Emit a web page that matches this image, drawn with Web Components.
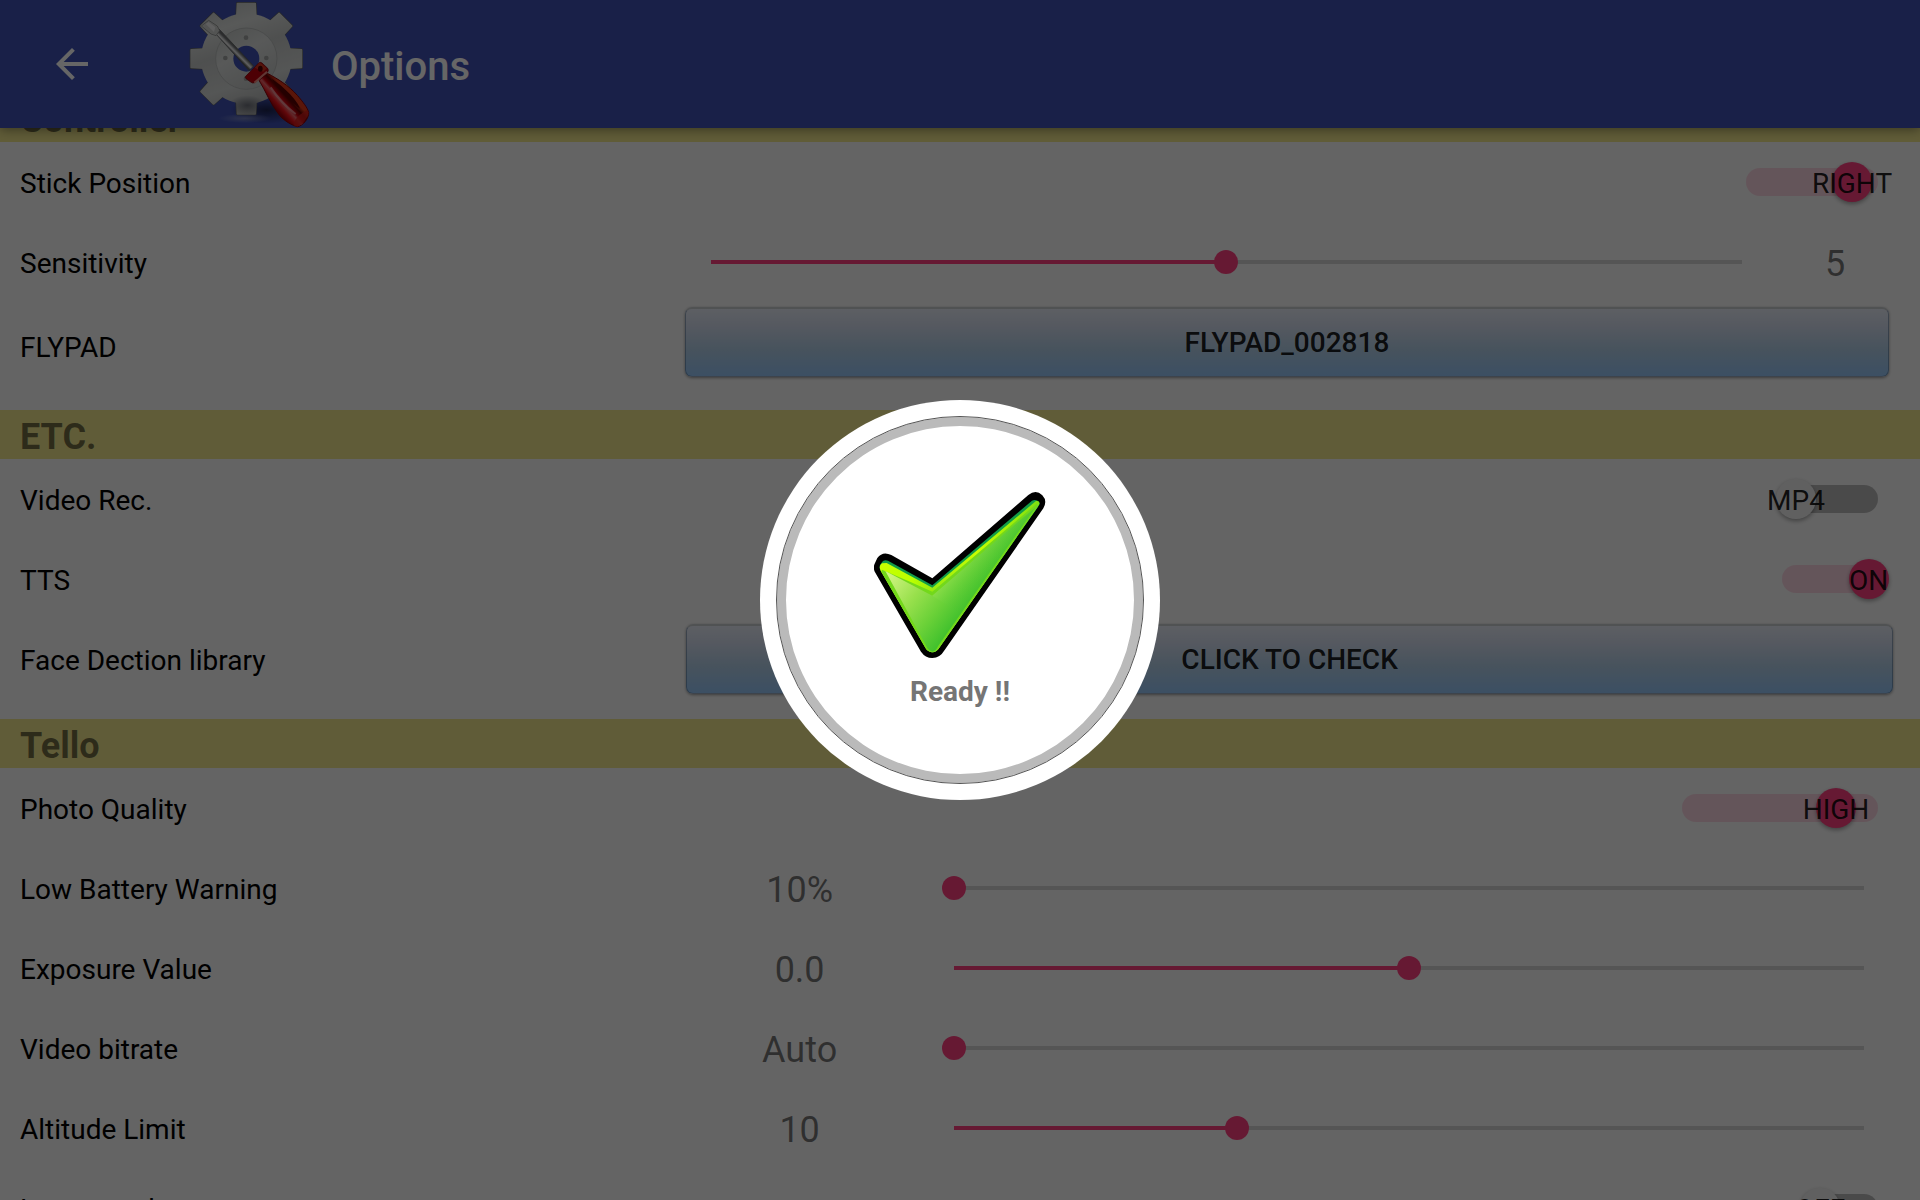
<!DOCTYPE html>
<html lang="en">
<head>
<meta charset="utf-8">
<title>Options</title>
<style>
  :root {
    --primary: #3f51b5;
    --accent: #ff4081;
    --surface: #fafafa;
    --band: #f0e68c;
    --text: #000;
    --text-secondary: rgba(0, 0, 0, .54);
    --text-control: rgba(0, 0, 0, .87);
  }

  body {
    margin: 0;
    height: 100vh;
    overflow: hidden;
    background: var(--surface);
    color: var(--text);
    font: 28px/33px Roboto, "Liberation Sans", sans-serif;
  }
</style>
</head>
<body>
<options-page></options-page>

<script>
class AppBar extends HTMLElement {
  constructor() {
    super();
    this.attachShadow({ mode: 'open' });
    this.shadowRoot.innerHTML = `
      <style>
        :host {
          display: block;
          position: relative;
          z-index: 1;
          background: var(--primary);
          box-shadow: 0 2px 10px rgba(0, 0, 0, .4);
        }

        header {
          display: flex;
          align-items: center;
          height: 128px;
          padding: 0 48px;
          color: #fff;
        }

        button {
          width: 48px;
          height: 48px;
          padding: 0;
          border: 0;
          background: none;
          color: inherit;
        }

        svg {
          display: block;
        }

        .logo {
          margin: 0 19px 0 88px;
        }

        h1 {
          margin: 0;
          padding-top: 6px;
          font-size: 40px;
          line-height: 48px;
          font-weight: 500;
        }
      </style>
      <header>
        <button type="button" aria-label="Back">
          <svg width="48" height="48" viewBox="0 0 24 24"><path fill="currentColor" d="M20 11H7.83l5.59-5.59L12 4l-8 8 8 8 1.41-1.41L7.83 13H20z"/></svg>
        </button>
        <svg class="logo" width="128" height="128" viewBox="72 0 384 384" aria-hidden="true">
          <defs>
            <linearGradient id="metal" gradientUnits="userSpaceOnUse" x1="190" y1="10" x2="300" y2="345">
              <stop offset="0" stop-color="#c6cac8"/>
              <stop offset=".2" stop-color="#dde0de"/>
              <stop offset=".42" stop-color="#c4c7c6"/>
              <stop offset=".7" stop-color="#d4d7d6"/>
              <stop offset="1" stop-color="#a8aaa9"/>
            </linearGradient>
            <linearGradient id="face" gradientUnits="userSpaceOnUse" x1="200" y1="90" x2="300" y2="265">
              <stop offset="0" stop-color="#c6cac8"/>
              <stop offset=".4" stop-color="#dcdfde"/>
              <stop offset="1" stop-color="#c2c5c4"/>
            </linearGradient>
            <linearGradient id="handle" gradientUnits="userSpaceOnUse" x1="334" y1="312" x2="378" y2="272">
              <stop offset="0" stop-color="#a00008"/>
              <stop offset=".25" stop-color="#f0141c"/>
              <stop offset=".45" stop-color="#ee6a70"/>
              <stop offset=".58" stop-color="#c8000c"/>
              <stop offset=".8" stop-color="#620000"/>
              <stop offset="1" stop-color="#e03818"/>
            </linearGradient>
            <linearGradient id="shaft" gradientUnits="userSpaceOnUse" x1="212" y1="152" x2="223" y2="141">
              <stop offset="0" stop-color="#5c5e60"/>
              <stop offset=".45" stop-color="#f4f4f4"/>
              <stop offset="1" stop-color="#6e7072"/>
            </linearGradient>
            <radialGradient id="shade">
              <stop offset="0" stop-color="#10142c" stop-opacity=".75"/>
              <stop offset="1" stop-color="#10142c" stop-opacity="0"/>
            </radialGradient>
            <radialGradient id="gleam">
              <stop offset="0" stop-color="#9fa8c8" stop-opacity=".55"/>
              <stop offset="1" stop-color="#9fa8c8" stop-opacity="0"/>
            </radialGradient>
            <path id="tooth" d="M-29-166q0-2 3-2h52q3 0 3 2l2 38q1 8 18 16l-8 20h-82l-8-20q17-8 18-16z"/>
            <g id="gear">
              <use href="#tooth"/>
              <use href="#tooth" transform="rotate(45)"/>
              <use href="#tooth" transform="rotate(90)"/>
              <use href="#tooth" transform="rotate(135)"/>
              <use href="#tooth" transform="rotate(180)"/>
              <use href="#tooth" transform="rotate(225)"/>
              <use href="#tooth" transform="rotate(270)"/>
              <use href="#tooth" transform="rotate(315)"/>
            </g>
            <mask id="cut" maskUnits="userSpaceOnUse" x="72" y="0" width="384" height="384">
              <g transform="translate(259 176)" fill="#fff">
                <use href="#gear"/>
                <circle r="136"/>
                <circle r="39" fill="#000"/>
              </g>
            </mask>
          </defs>
          <ellipse cx="320" cy="330" rx="110" ry="42" fill="url(#shade)"/>
          <ellipse cx="255" cy="355" rx="80" ry="14" fill="url(#gleam)"/>
          <g transform="translate(259 176)" fill="none" stroke="#5c5f63" stroke-width="4">
            <use href="#gear"/>
          </g>
          <g mask="url(#cut)">
            <rect x="72" width="384" height="384" fill="url(#metal)"/>
            <circle cx="259" cy="176" r="92" fill="url(#face)" stroke="#aeb1b0" stroke-width="2"/>
            <ellipse cx="262" cy="316" rx="56" ry="30" fill="url(#shade)" opacity=".6"/>
            <g fill="#a0a3a2">
              <circle cx="258" cy="113" r="7"/>
              <circle cx="196" cy="174" r="7"/>
              <circle cx="319" cy="174" r="7"/>
              <circle cx="258" cy="236" r="7"/>
            </g>
          </g>
          <path d="M166 100l12-12 103 110-14 14z" fill="url(#shaft)" stroke="#55585a" stroke-width="2"/>
          <path d="M124 78l22-17 26 17 7 14-11 15-15-5z" fill="#cfd1d0" stroke="#7b7e7d" stroke-width="2"/>
          <path d="M137 72l9-6 20 16-4 14z" fill="#eee"/>
          <path d="M297 241l25-21c32 17 62 35 90 66 17 20 31 38 34 51 2 17-18 42-34 43-13-3-39-16-55-36-26-32-39-70-60-103z" fill="url(#handle)" stroke="#870008" stroke-width="3"/>
          <path d="M335 237c28 16 75 60 85 89-21-13-70-62-85-89z" fill="#5a0000"/>
          <path d="M332 262c24 36 47 59 75 80" fill="none" stroke="#f5a4a8" stroke-width="6" opacity=".75"/>
          <path d="M446 337c-1 15-18 37-34 43-8-1-13-5-10-12 4-14 25-32 37-36 4-1 6 2 7 5z" fill="#d81c1a" opacity=".8"/>
          <path d="M257 229l39-40q5-4 10 0l17 16q4 6 0 11l-39 32q-6 3-12-2l-14-10q-4-4-1-7z" fill="#c0000c" stroke="#780006" stroke-width="2"/>
          <path d="M283 248l38-33" stroke="#f08a80" stroke-width="6"/>
          <path d="M284 203l12-13q5-3 9 1l15 14-10 10z" fill="#d3331c"/>
          <ellipse cx="301" cy="206" rx="7" ry="9" fill="#500000"/>
        </svg>
        <h1><slot></slot></h1>
      </header>
    `;
  }
}

class OptionSection extends HTMLElement {
  constructor() {
    super();
    this.attachShadow({ mode: 'open' });
    this.shadowRoot.innerHTML = `
      <style>
        :host {
          display: block;
        }

        h2 {
          margin: 0;
          padding: 6px 20px 1px;
          background: var(--band);
          color: var(--text-secondary);
          font-size: 36px;
          line-height: 42px;
          font-weight: 700;
        }

        .rows {
          display: flex;
          flex-direction: column;
        }

        :host([spaced]) .rows {
          padding-bottom: 20px;
        }
      </style>
      <section>
        <h2>${this.getAttribute('heading')}</h2>
        <div class="rows"><slot></slot></div>
      </section>
    `;
  }
}

class SwitchRow extends HTMLElement {
  constructor() {
    super();
    this.attachShadow({ mode: 'open' });
    const checked = this.hasAttribute('checked') ? 'checked' : '';
    this.shadowRoot.innerHTML = `
      <style>
        :host {
          --thumb: 80px;
          display: block;
        }

        label {
          display: flex;
          align-items: center;
          justify-content: space-between;
          height: 80px;
          padding: 0 28px 0 20px;
        }

        :host([flush]) label {
          padding-right: 18px;
        }

        .name {
          padding-top: 3px;
        }

        .switch {
          display: grid;
          grid-template-columns: var(--thumb) var(--thumb);
          align-items: center;
          justify-items: center;
        }

        input {
          grid-area: 1 / 1 / 2 / 3;
          justify-self: stretch;
          appearance: none;
          height: 28px;
          margin: 0 14px;
          border-radius: 14px;
          background: rgba(0, 0, 0, .26);
        }

        input:checked {
          background: rgba(255, 64, 129, .2);
        }

        .knob, .state {
          grid-area: 1 / 1;
        }

        .knob {
          width: 40px;
          height: 40px;
          border-radius: 50%;
          background: #f1f1f1;
          box-shadow: 0 2px 4px rgba(0, 0, 0, .35);
        }

        .state {
          padding-top: 3px;
          color: var(--text-control);
          white-space: nowrap;
        }

        input:checked ~ .knob, input:checked ~ .state {
          grid-area: 1 / 2;
        }

        input:checked ~ .knob {
          background: var(--accent);
        }
      </style>
      <label>
        <span class="name"><slot></slot></span>
        <span class="switch">
          <input type="checkbox" ${checked}>
          <span class="knob"></span>
          <span class="state">${this.getAttribute('state')}</span>
        </span>
      </label>
    `;
  }
}

class SliderRow extends HTMLElement {
  constructor() {
    super();
    this.attachShadow({ mode: 'open' });
    this.shadowRoot.innerHTML = `
      <style>
        :host {
          display: block;
        }

        .row {
          display: grid;
          grid-template-columns: 54fr 20fr 80fr;
          align-items: center;
          height: 80px;
          padding: 0 24px 0 20px;
        }

        :host([value-last]) .row {
          grid-template-columns: 54fr 90fr 10fr;
        }

        label, output {
          padding-top: 3px;
        }

        output {
          color: var(--text-secondary);
          font-size: 36px;
          line-height: 42px;
          text-align: center;
        }

        :host([value-last]) output {
          order: 1;
        }

        /* the track is inset by half a thumb on both sides */
        input {
          --fill: 0;
          appearance: none;
          height: 24px;
          margin: 0 20px 0 21px;
          background:
            linear-gradient(var(--accent), var(--accent)) 12px 50% / calc((100% - 24px) * var(--fill)) 4px no-repeat,
            linear-gradient(#d4d4d4, #d4d4d4) 50% 50% / calc(100% - 24px) 4px no-repeat;
        }

        input::-webkit-slider-thumb {
          appearance: none;
          width: 24px;
          height: 24px;
          border-radius: 50%;
          background: var(--accent);
        }
      </style>
      <div class="row">
        <label for="range"><slot></slot></label>
        <output for="range">${this.getAttribute('text')}</output>
        <input id="range" type="range" min="${this.getAttribute('min')}" max="${this.getAttribute('max')}" value="${this.getAttribute('value')}">
      </div>
    `;
  }

  connectedCallback() {
    this.range = this.shadowRoot.getElementById('range');
    this.range.addEventListener('input', () => {
      this.shadowRoot.querySelector('output').textContent = this.range.value;
      this.updateFill();
    });
    this.updateFill();
  }

  updateFill() {
    const { min, max, value } = this.range;
    this.range.style.setProperty('--fill', (value - min) / (max - min));
  }
}

class ButtonRow extends HTMLElement {
  constructor() {
    super();
    this.attachShadow({ mode: 'open' });
    this.shadowRoot.innerHTML = `
      <style>
        :host {
          display: block;
        }

        .row {
          display: grid;
          grid-template-columns: 54fr 100fr;
          align-items: center;
          min-height: 80px;
          padding: 0 20px;
        }

        label {
          padding-top: 3px;
        }

        button {
          height: 70px;
          margin: 0 7px;
          border: 1px solid rgba(60, 90, 120, .45);
          border-top: 2px solid #c8ccd0;
          border-radius: 7px;
          background: linear-gradient(#e8edf8, #d5def0 25%, #b2cfe8 60%, #96c6f8);
          box-shadow: 0 1px 3px rgba(0, 0, 0, .4);
          color: var(--text-control);
          font: inherit;
          font-weight: 500;
        }

        :host([tall]) .row {
          min-height: 88px;
          padding-right: 24px;
        }

        :host([tall]) button {
          align-self: start;
          margin-top: 5px;
        }
      </style>
      <div class="row">
        <label for="action"><slot></slot></label>
        <button id="action" type="button">${this.getAttribute('text')}</button>
      </div>
    `;
  }
}

class ReadyOverlay extends HTMLElement {
  constructor() {
    super();
    this.attachShadow({ mode: 'open' });
    this.shadowRoot.innerHTML = `
      <style>
        :host {
          position: fixed;
          inset: 0;
          z-index: 2;
          display: grid;
          place-items: center;
          background: rgba(0, 0, 0, .6);
        }

        .disc {
          padding: 16px;
          border-radius: 50%;
          background: #fff;
        }

        .ring {
          box-sizing: border-box;
          display: flex;
          flex-direction: column;
          align-items: center;
          justify-content: center;
          gap: 17px;
          width: 368px;
          height: 368px;
          border: 1px solid #555;
          border-radius: 50%;
          background: #fff;
          box-shadow: inset 0 0 0 9px #bababa;
        }

        p {
          margin: 0;
          color: #757575;
          font-weight: 700;
        }
      </style>
      <div class="disc" role="dialog" aria-labelledby="message">
        <div class="ring">
          <svg width="172" height="166" viewBox="42 67 516 498" aria-hidden="true">
            <defs>
              <linearGradient id="green" gradientUnits="userSpaceOnUse" x1="85" y1="310" x2="290" y2="470">
                <stop offset="0" stop-color="#d2f582"/>
                <stop offset=".4" stop-color="#98e04c"/>
                <stop offset=".7" stop-color="#6bd138"/>
                <stop offset="1" stop-color="#3cbf2c"/>
              </linearGradient>
              <linearGradient id="arm" gradientUnits="userSpaceOnUse" x1="330" y1="240" x2="400" y2="300">
                <stop offset="0" stop-color="#8cde48"/>
                <stop offset="1" stop-color="#46c42e" stop-opacity="0"/>
              </linearGradient>
              <linearGradient id="lime" gradientUnits="userSpaceOnUse" x1="60" y1="0" x2="540" y2="0">
                <stop offset="0" stop-color="#c8ff00"/>
                <stop offset=".2" stop-color="#baff00"/>
                <stop offset=".33" stop-color="#96ea10"/>
                <stop offset=".6" stop-color="#c8ff00"/>
                <stop offset="1" stop-color="#7ee010"/>
              </linearGradient>
            </defs>
            <path d="M94 256L217 326 505 76Q528 58 547 77 563 94 550 116L254 541Q240 565 217 565 196 565 183 546L46 309Q38 296 44 282L52 265Q68 243 94 256z" fill="#000"/>
            <path d="M84 273L217 347 516 93Q529 88 538 98 541 102 534 112L240 531Q231 547 217 548 204 547 197 536L62 303Q55 290 63 282 70 268 84 273z" fill="#129c48"/>
            <path d="M66 281L80 280 217 354 380 218 528 94Q540 92 538 104L240 531Q231 547 217 548 204 547 197 536L62 303Q55 289 66 281z" fill="url(#lime)"/>
            <path d="M66 300L150 336 217 366 350 254 530 102 534 110 240 531Q231 547 217 548 204 547 197 536L64 306z" fill="#73d81b"/>
            <path d="M76 304L217 378 470 160 526 114 234 530Q228 544 217 546 207 544 202 535z" fill="url(#green)"/>
            <path d="M217 378L470 160 526 114 300 430z" fill="url(#arm)"/>
          </svg>
          <p id="message"><slot></slot></p>
        </div>
      </div>
    `;
  }
}

class OptionsPage extends HTMLElement {
  constructor() {
    super();
    this.attachShadow({ mode: 'open' });
    this.shadowRoot.innerHTML = `
      <style>
        :host {
          display: flex;
          flex-direction: column;
          height: 100%;
        }

        main {
          flex: 1;
          min-height: 0;
          overflow: hidden;
        }

        /* list scrolled a little way under the app bar */
        .list {
          margin-top: -35px;
        }
      </style>
      <app-bar>Options</app-bar>
      <main>
        <div class="list">
          <option-section heading="Controller" spaced>
            <switch-row state="RIGHT" checked>Stick Position</switch-row>
            <slider-row value-last min="0" max="10" value="5" text="5">Sensitivity</slider-row>
            <button-row tall text="FLYPAD_002818">FLYPAD</button-row>
          </option-section>
          <option-section heading="ETC." spaced>
            <switch-row state="MP4" style="--thumb: 64px">Video Rec.</switch-row>
            <switch-row flush state="ON" checked style="--thumb: 67px">TTS</switch-row>
            <button-row text="CLICK TO CHECK">Face Dection library</button-row>
          </option-section>
          <option-section heading="Tello">
            <switch-row state="HIGH" checked style="--thumb: 112px">Photo Quality</switch-row>
            <slider-row min="10" max="50" value="10" text="10%">Low Battery Warning</slider-row>
            <slider-row min="-3" max="3" value="0" text="0.0">Exposure Value</slider-row>
            <slider-row min="0" max="5" value="0" text="Auto">Video bitrate</slider-row>
            <slider-row min="1" max="30" value="10" text="10">Altitude Limit</slider-row>
            <switch-row state="OFF" style="--thumb: 48px">Low speed</switch-row>
          </option-section>
        </div>
      </main>
      <ready-overlay>Ready !!</ready-overlay>
    `;
  }
}

customElements.define('app-bar', AppBar);
customElements.define('option-section', OptionSection);
customElements.define('switch-row', SwitchRow);
customElements.define('slider-row', SliderRow);
customElements.define('button-row', ButtonRow);
customElements.define('ready-overlay', ReadyOverlay);
customElements.define('options-page', OptionsPage);
</script>
</body>
</html>
